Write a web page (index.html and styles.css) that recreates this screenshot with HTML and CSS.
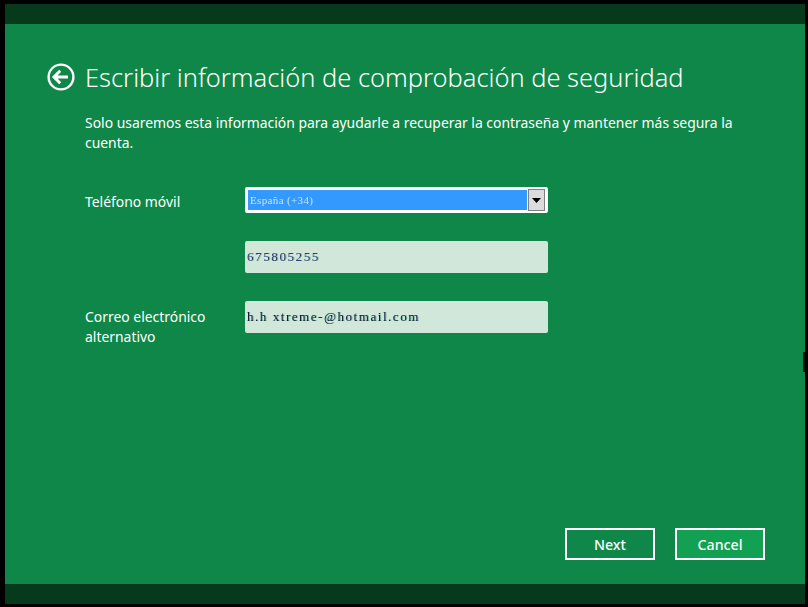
FILE: index.html
```html
<!DOCTYPE html>
<html lang="es">
<head>
<meta charset="utf-8">
<title>Escribir información de comprobación de seguridad</title>
<link rel="stylesheet" href="styles.css">
</head>
<body>
<div class="window">
  <div class="band"></div>
  <main class="content">
    <header class="head">
      <svg class="back" width="28" height="28" viewBox="0 0 28 28" aria-hidden="true">
        <circle cx="14" cy="14" r="12.4" fill="none" stroke="#fff" stroke-width="2.4"/>
        <path d="M7 14H21M13.2 7.8L7 14L13.2 20.2" fill="none" stroke="#fff" stroke-width="3"/>
      </svg>
      <h1 class="title">Escribir información de comprobación de seguridad</h1>
    </header>
    <p class="intro">Solo usaremos esta información para ayudarle a recuperar la contraseña y mantener más segura la cuenta.</p>
    <div class="form">
      <div class="label label-phone">Teléfono móvil</div>
      <div class="select">
        <span class="select-value">España (+34)</span>
        <span class="select-btn"><svg width="9" height="5" viewBox="0 0 9 5"><path d="M0 0H9L4.5 5Z" fill="#000"/></svg></span>
      </div>
      <div class="input input-num"><span class="garbled garbled-num">675805255</span></div>
      <div class="label label-mail">Correo electrónico<br>alternativo</div>
      <div class="input input-mail"><span class="garbled">h.h xtreme-@hotmail.com</span></div>
    </div>
    <div class="actions">
      <button class="btn" type="button">Next</button>
      <button class="btn btn-alt" type="button">Cancel</button>
    </div>
  </main>
  <div class="band"></div>
  <div class="notch"></div>
</div>
</body>
</html>
```
FILE: styles.css
```css
* { box-sizing: border-box; }
html, body { margin: 0; height: 100%; background: #000; overflow: hidden; }
body { padding: 4px 3px 3px 5px; font-family: "Noto Sans", "Open Sans", sans-serif; color: #fff; }
.window { position: relative; height: 600px; display: flex; flex-direction: column; background: #0f8748; }
.band { height: 20px; flex: none; background: #073a1d; }
.notch { position: absolute; right: 0; top: 348px; width: 2px; height: 20px; background: #03190d; }
.content { flex: 1; display: flex; flex-direction: column; padding: 39px 40px 0 42px; }
.head { display: flex; align-items: center; gap: 10px; height: 28px; }
.back { flex: none; }
.title { margin: 0; font-size: 25.45px; font-weight: 300; line-height: 28px; white-space: nowrap; }
.intro { margin: 22px 0 0 38px; width: 680px; font-size: 13.92px; line-height: 20px; }
.form { margin: 34px 0 0 38px; display: grid; grid-template-columns: 160px 303px; grid-template-rows: 26px 32px 32px; row-gap: 28px; }
.label { font-size: 13.92px; line-height: 20px; }
.label-phone { padding-top: 5px; }
.label-mail { grid-column: 1; grid-row: 3; padding-top: 6px; }
.select { grid-column: 2; grid-row: 1; display: flex; background: #3399ff; border: 3px solid #fff; border-radius: 2px; }
.select-value { flex: 1; font: 11px/20px "Liberation Serif", serif; letter-spacing: .35px; padding-left: 2px; color: #e4f1ff; opacity: .85; filter: blur(.4px); }
.select-btn { width: 17px; flex: none; margin: -1px 0; display: flex; align-items: center; justify-content: center; background: #dcdcdc; border: 1px solid #808080; outline: 1px solid #fff; }
.input { grid-column: 2; background: #d0e7da; border-radius: 2px; padding-left: 2px; display: flex; align-items: center; }
.input-num { grid-row: 2; }
.input-mail { grid-row: 3; }
.garbled { font: 400 13px "Liberation Serif", serif; color: #14183a; letter-spacing: 1.55px; text-shadow: 1px 0 rgba(60, 160, 120, .6); filter: blur(.3px); }
.garbled-num { letter-spacing: 1.6px; color: #3a3a78; }
.actions { margin-top: auto; margin-bottom: 24px; display: flex; justify-content: flex-end; gap: 20px; }
.btn { width: 90px; height: 32px; padding: 0; background: #0f8748; border: 2px solid #fff; color: #fff; font: 500 14.2px "Noto Sans", "Open Sans", sans-serif; }
.btn-alt { background: #12a052; }
```
